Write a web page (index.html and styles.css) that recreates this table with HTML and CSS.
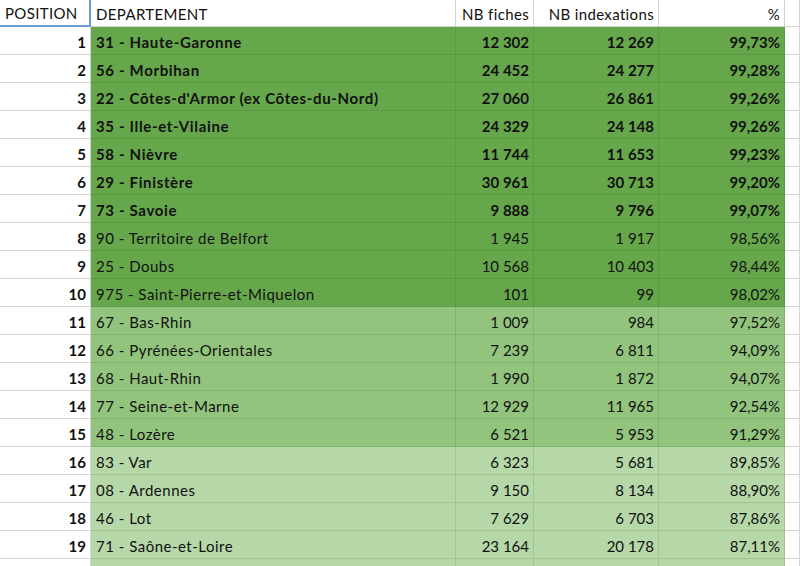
FILE: index.html
```html
<!DOCTYPE html>
<html lang="fr">
<head>
<meta charset="utf-8">
<title>Classement</title>
<link rel="stylesheet" href="styles.css">
</head>
<body>
<div class="sheet">
  <div class="row head">
    <div class="c pos sel">POSITION</div>
    <div class="c dep">DEPARTEMENT</div>
    <div class="c n1 r">NB fiches</div>
    <div class="c n2 r">NB indexations</div>
    <div class="c pc r">%</div>
    <div class="c ex"></div>
  </div>
  <div class="row g1 b"><div class="c pos r">1</div><div class="c dep">31 - Haute-Garonne</div><div class="c n1 r">12 302</div><div class="c n2 r">12 269</div><div class="c pc r">99,73%</div><div class="c ex"></div></div>
  <div class="row g1 b"><div class="c pos r">2</div><div class="c dep">56 - Morbihan</div><div class="c n1 r">24 452</div><div class="c n2 r">24 277</div><div class="c pc r">99,28%</div><div class="c ex"></div></div>
  <div class="row g1 b"><div class="c pos r">3</div><div class="c dep">22 - Côtes-d'Armor (ex Côtes-du-Nord)</div><div class="c n1 r">27 060</div><div class="c n2 r">26 861</div><div class="c pc r">99,26%</div><div class="c ex"></div></div>
  <div class="row g1 b"><div class="c pos r">4</div><div class="c dep">35 - Ille-et-Vilaine</div><div class="c n1 r">24 329</div><div class="c n2 r">24 148</div><div class="c pc r">99,26%</div><div class="c ex"></div></div>
  <div class="row g1 b"><div class="c pos r">5</div><div class="c dep">58 - Nièvre</div><div class="c n1 r">11 744</div><div class="c n2 r">11 653</div><div class="c pc r">99,23%</div><div class="c ex"></div></div>
  <div class="row g1 b"><div class="c pos r">6</div><div class="c dep">29 - Finistère</div><div class="c n1 r">30 961</div><div class="c n2 r">30 713</div><div class="c pc r">99,20%</div><div class="c ex"></div></div>
  <div class="row g1 b"><div class="c pos r">7</div><div class="c dep">73 - Savoie</div><div class="c n1 r">9 888</div><div class="c n2 r">9 796</div><div class="c pc r">99,07%</div><div class="c ex"></div></div>
  <div class="row g1"><div class="c pos r">8</div><div class="c dep">90 - Territoire de Belfort</div><div class="c n1 r">1 945</div><div class="c n2 r">1 917</div><div class="c pc r">98,56%</div><div class="c ex"></div></div>
  <div class="row g1"><div class="c pos r">9</div><div class="c dep">25 - Doubs</div><div class="c n1 r">10 568</div><div class="c n2 r">10 403</div><div class="c pc r">98,44%</div><div class="c ex"></div></div>
  <div class="row g1"><div class="c pos r">10</div><div class="c dep">975 - Saint-Pierre-et-Miquelon</div><div class="c n1 r">101</div><div class="c n2 r">99</div><div class="c pc r">98,02%</div><div class="c ex"></div></div>
  <div class="row g2"><div class="c pos r">11</div><div class="c dep">67 - Bas-Rhin</div><div class="c n1 r">1 009</div><div class="c n2 r">984</div><div class="c pc r">97,52%</div><div class="c ex"></div></div>
  <div class="row g2"><div class="c pos r">12</div><div class="c dep">66 - Pyrénées-Orientales</div><div class="c n1 r">7 239</div><div class="c n2 r">6 811</div><div class="c pc r">94,09%</div><div class="c ex"></div></div>
  <div class="row g2"><div class="c pos r">13</div><div class="c dep">68 - Haut-Rhin</div><div class="c n1 r">1 990</div><div class="c n2 r">1 872</div><div class="c pc r">94,07%</div><div class="c ex"></div></div>
  <div class="row g2"><div class="c pos r">14</div><div class="c dep">77 - Seine-et-Marne</div><div class="c n1 r">12 929</div><div class="c n2 r">11 965</div><div class="c pc r">92,54%</div><div class="c ex"></div></div>
  <div class="row g2"><div class="c pos r">15</div><div class="c dep">48 - Lozère</div><div class="c n1 r">6 521</div><div class="c n2 r">5 953</div><div class="c pc r">91,29%</div><div class="c ex"></div></div>
  <div class="row g3"><div class="c pos r">16</div><div class="c dep">83 - Var</div><div class="c n1 r">6 323</div><div class="c n2 r">5 681</div><div class="c pc r">89,85%</div><div class="c ex"></div></div>
  <div class="row g3"><div class="c pos r">17</div><div class="c dep">08 - Ardennes</div><div class="c n1 r">9 150</div><div class="c n2 r">8 134</div><div class="c pc r">88,90%</div><div class="c ex"></div></div>
  <div class="row g3"><div class="c pos r">18</div><div class="c dep">46 - Lot</div><div class="c n1 r">7 629</div><div class="c n2 r">6 703</div><div class="c pc r">87,86%</div><div class="c ex"></div></div>
  <div class="row g3"><div class="c pos r">19</div><div class="c dep">71 - Saône-et-Loire</div><div class="c n1 r">23 164</div><div class="c n2 r">20 178</div><div class="c pc r">87,11%</div><div class="c ex"></div></div>
  <div class="row g3"><div class="c pos r"></div><div class="c dep"></div><div class="c n1 r"></div><div class="c n2 r"></div><div class="c pc r"></div><div class="c ex"></div></div>
</div>
</body>
</html>
```
FILE: styles.css
```css
html, body {
  margin: 0;
  padding: 0;
  background: #ffffff;
  overflow: hidden;
}
.sheet {
  width: 800px;
  font-family: Lato, "Open Sans", sans-serif;
  font-size: 15px;
  color: #111;
}
.row {
  display: flex;
  height: 28px;
}
.row.head {
  height: 27px;
  letter-spacing: 0.35px;
}
.c {
  box-sizing: border-box;
  height: 100%;
  border-right: 1px solid #d4d4d4;
  border-bottom: 1px solid #d4d4d4;
  display: flex;
  align-items: flex-end;
  padding: 0 4px 3px 5px;
  white-space: nowrap;
  overflow: hidden;
}
.r { justify-content: flex-end; }
.pos { width: 91px; font-weight: bold; background: #fff; }
.head .pos { font-weight: normal; }
.dep { width: 365px; letter-spacing: 0.5px; }
.b .dep { letter-spacing: 0.65px; }
.head .dep { letter-spacing: 0.35px; }
.n1 { width: 78px; }
.n2 { width: 125px; }
.pc { width: 126px; }
.ex { flex: 1; background: #fff; }
.head .c { background: #fff; }
.head .sel {
  border-right: 2px solid #6c9bd2;
  border-bottom: 2px solid #6c9bd2;
}
.b .c { font-weight: bold; }
.g1 .dep, .g1 .n1, .g1 .n2, .g1 .pc { background: #67a74c; border-color: #5a9a44; }
.g2 .dep, .g2 .n1, .g2 .n2, .g2 .pc { background: #93c47d; border-color: #83b26e; }
.g3 .dep, .g3 .n1, .g3 .n2, .g3 .pc { background: #b6d7a8; border-color: #a2c493; }
```
